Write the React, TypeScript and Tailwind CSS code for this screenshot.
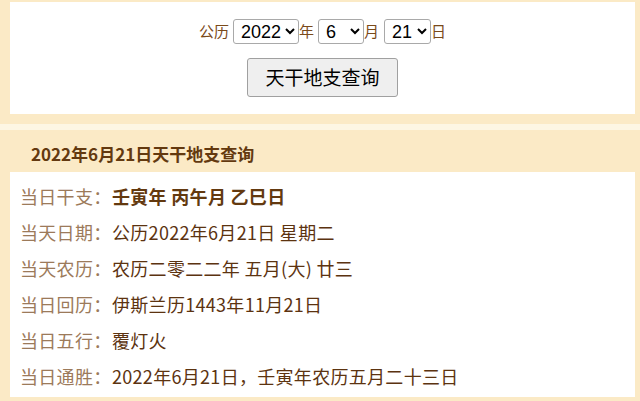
import { useState } from 'react'

const cjk = { fontFamily: '"Noto Sans CJK SC", "Liberation Sans", sans-serif' }
const latin = { fontFamily: '"Liberation Sans", "Noto Sans CJK SC", sans-serif' }

const rows: { label: string; value: string; strong?: boolean }[] = [
  { label: '当日干支：', value: '壬寅年 丙午月 乙巳日', strong: true },
  { label: '当天日期：', value: '公历2022年6月21日 星期二' },
  { label: '当天农历：', value: '农历二零二二年 五月(大) 廿三' },
  { label: '当日回历：', value: '伊斯兰历1443年11月21日' },
  { label: '当日五行：', value: '覆灯火' },
  { label: '当日通胜：', value: '2022年6月21日，壬寅年农历五月二十三日' },
]

const years = Array.from({ length: 11 }, (_, i) => 2017 + i)
const months = Array.from({ length: 12 }, (_, i) => i + 1)
const days = Array.from({ length: 31 }, (_, i) => i + 1)

export default function App() {
  const [year, setYear] = useState(2022)
  const [month, setMonth] = useState(6)
  const [day, setDay] = useState(21)

  const selectCls =
    'h-[25px] border border-[#a9a9a9] rounded-[3px] bg-white text-black text-[18px] pl-[3px] pr-0'

  return (
    <div className="min-h-[401px] bg-[#fdf6e3]" style={cjk}>
      {/* Query form */}
      <div className="bg-[#fbeac6] pt-[2px] pb-[10px] pl-[10px] pr-[5px]">
        <div className="bg-white h-[112px] flex flex-col items-center">
          <div className="mt-[17px] flex items-center text-[15px] text-[#7a4a1a]">
            <span className="mr-[4px]">公历</span>
            <select
              value={year}
              onChange={(e) => setYear(Number(e.target.value))}
              className={`${selectCls} w-[66px]`}
              style={latin}
            >
              {years.map((y) => (
                <option key={y} value={y}>{y}</option>
              ))}
            </select>
            <span>年</span>
            <select
              value={month}
              onChange={(e) => setMonth(Number(e.target.value))}
              className={`${selectCls} w-[46px] ml-[4px]`}
              style={latin}
            >
              {months.map((m) => (
                <option key={m} value={m}>{m}</option>
              ))}
            </select>
            <span>月</span>
            <select
              value={day}
              onChange={(e) => setDay(Number(e.target.value))}
              className={`${selectCls} w-[47px] ml-[5px]`}
              style={latin}
            >
              {days.map((d) => (
                <option key={d} value={d}>{d}</option>
              ))}
            </select>
            <span>日</span>
          </div>
          <button className="mt-[14px] w-[151px] h-[39px] bg-[#efefef] border border-[#a0a0a0] rounded-[3px] text-[19px] text-black">
            天干地支查询
          </button>
        </div>
      </div>

      {/* Result */}
      <div className="mt-[6px] bg-[#fbeac6] pl-[10px] pr-[5px] pb-[4px]">
        <div className="h-[42px] flex items-center pl-[21px] pt-[5px] text-[17px] font-bold text-[#63390f]">
          2022年6月21日天干地支查询
        </div>
        <div className="bg-white pt-[6px] pb-[3px] pl-[10px]">
          {rows.map((r) => (
            <div key={r.label} className="h-[36px] flex items-center text-[18px] tracking-[0.3px]">
              <span className="text-[#9c7a5a] w-[92px]">{r.label}</span>
              <span className={r.strong ? 'font-bold text-[#63390f]' : 'text-[#5c3310]'}>
                {r.value}
              </span>
            </div>
          ))}
        </div>
      </div>
    </div>
  )
}
